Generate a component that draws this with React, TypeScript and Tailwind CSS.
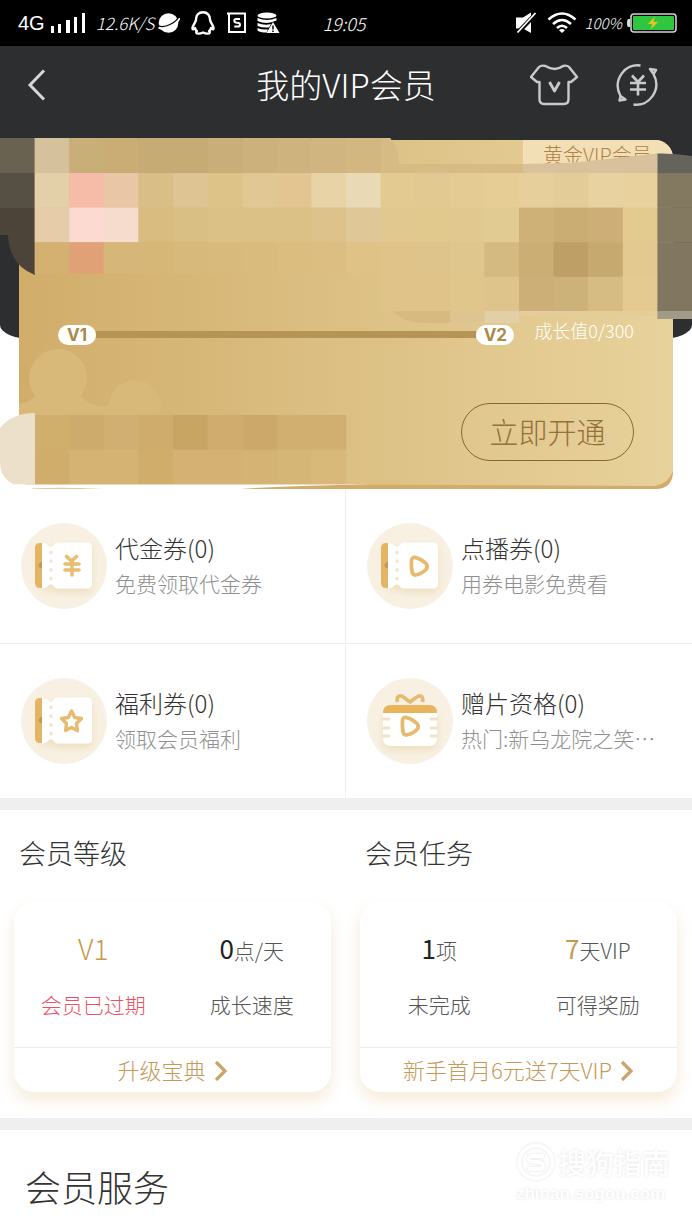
import React from 'react';

const CELL = 34.6;

const mosaicRows: { y: number; h: number; start: number; colors: string[] }[] = [
  { y: 138, h: 35, start: 1, colors: ['#d5c29c', '#c8ae77', '#c9ad75', '#c7ab74', '#c7ab74', '#c9ae7a', '#ccb17c', '#ceb37e', '#d0b580', '#d3b781'] },
  { y: 173, h: 34.6, start: 0, colors: ['#564f43', '#e3d0a8', '#f7bca8', '#e8c6a6', '#d9bf87', '#dec492', '#dec389', '#e1c794', '#e2c591', '#e8d3a6', '#ead9b5', '#e3ca91', '#e2c991', '#e4cb93', '#e6cd95', '#e7cf9c', '#e4cc98', '#e8d2a0', '#e8d19c', '#837860'] },
  { y: 207.6, h: 34.6, start: 1, colors: ['#e6cca9', '#fcdad1', '#f6dccd', '#d8bc80', '#dabf84', '#dcc186', '#dcc186', '#dcc186', '#ddc38b', '#dfc797', '#e0c88e', '#e1c88c', '#e1c88e', '#e2ca93', '#cdb177', '#c9ad73', '#ccae76', '#e3ca8f', '#837860'] },
  { y: 242.2, h: 31, start: 1, colors: ['#d4b170', '#e1a177', '#d7b679', '#d7b778', '#d8b97c', '#d9ba7d', '#d9bb7e', '#dbbd80', '#dcbe82', '#dec286'] },
  { y: 242.2, h: 34.6, start: 11, colors: ['#dfc388', '#dec38a', '#dfc68c', '#d4ba80', '#cbae74', '#be9f66', '#c6a96f', '#e3c98f', '#817760'] },
  { y: 276.8, h: 34.6, start: 11, colors: ['#dfc388', '#dfc389', '#e0c68b', '#dec48b', '#ccaf77', '#ccb179', '#d6bc83', '#e4ca91', '#817760'] },
  { y: 415, h: 34.8, start: 1, colors: ['#d0ae6c', '#cdab6c', '#d1ae72', '#cfac6b', '#c8a563', '#d0ad6f', '#cca96a', '#d1af70', '#d1af70'] },
  { y: 449.8, h: 34.6, start: 1, colors: ['#d0ad6b', '#d4b373', '#d4b373', '#d0ad6b', '#d5b274', '#d5b274', '#d4b375', '#d6b677', '#d8b97a'] },
];

function Mosaic() {
  return (
    <svg className="pointer-events-none absolute inset-0 h-full w-full" viewBox="0 138 692 351" preserveAspectRatio="none" aria-hidden="true">
      <g fill="#d8b97a">
        <circle cx="58" cy="378" r="29" />
        <circle cx="135" cy="406" r="26" />
        <path d="M19 404Q30 402 36 395H80Q90 406 101 406Q108 406 112 402V416H19Z" />
      </g>
      <path d="M340 138H390Q399 148 399 164H523L570 163L657 153.500V173H340Z" fill="#d8c19b" />
      <path d="M340 138H390Q399 148 399 164H523V173H340Z" fill="#d6bb84" />
      <path d="M657.400 153.500Q674 153 692 156V173H657.400Z" fill="#65645c" />
      <path d="M0 138H35V173H0Z" fill="#696250" />
      <path d="M0 207H35V275Q9 265 8 235H0Z" fill="#4c4439" />
      {mosaicRows.map((row) =>
        row.colors.map((color, i) => (
          <rect
            key={`${row.y}-${row.start + i}`}
            x={(row.start + i) * CELL}
            y={row.y}
            width={CELL + 0.4}
            height={row.h + 0.3}
            fill={color}
          />
        )),
      )}
      <path d="M393 311H450V323H425Q405 323 393 311Z" fill="#d6ba80" />
      <path d="M450 311H484.500V322H450Z" fill="#dec491" />
      <path d="M484.500 311H519V323H484.500Z" fill="#e2cfa6" />
      <path d="M519 311H657V316H519Z" fill="#e4cd98" />
      <path d="M657.400 311H692V319H657.400Z" fill="#a19a87" />
      <path d="M35 413V484.400H14Q0 478 0 462V428Q12 413 35 413Z" fill="#ede0ca" />
      <path d="M15 484.400H370L232 489.500H15Z" fill="#fff" />
      <path d="M32 488.500Q60 487 102 489H32Z" fill="#e3c898" />
      <path d="M240 489Q300 485 370 484.500L655 486Q668 484 673 471Q673 489 655 489Z" fill="#d3ac6b" />
    </svg>
  );
}

function StatusBar() {
  return (
    <div className="flex h-[46px] items-center bg-black pr-[15px] pl-[18px] text-white">
      <span className="font-['Liberation_Sans'] text-[20px] leading-6">4G</span>
      <svg className="ml-[5px]" width="36" height="22" viewBox="0 0 36 22" fill="currentColor" aria-hidden="true">
        <path d="M1 14h3v7H1zM8 12h3v9H8zM16 8h4v13h-4zM24 5h3v16h-3zM32 1h3v20h-3z" />
      </svg>
      <span className="ml-[10px] text-[17px] leading-6 font-light italic">12.6K/S</span>
      <svg className="ml-[4px]" width="22" height="22" viewBox="0 0 22 22" aria-hidden="true">
        <circle cx="10.500" cy="11" r="9.800" fill="#fff" />
        <path d="M.5 15.500Q5 18.500 12 15Q20 11 21.500 6" fill="none" stroke="#fff" strokeWidth="2" />
        <path d="M0 13.500Q5 16 12 12.500Q19 9 20.500 5" fill="none" stroke="#000" strokeWidth="1.200" />
      </svg>
      <svg className="ml-[11px]" width="24" height="24" viewBox="0 0 24 24" fill="none" stroke="#fff" strokeWidth="2.400" strokeLinejoin="round" aria-hidden="true">
        <path d="M12 1.300C7.500 1.300 5 4.500 5 8.500C5 11 2 13.500 1.500 17C1.300 19 2.500 18.500 4 17C4.300 18.500 5 19.500 6 20C4.500 21 5 22.600 7.500 22.600C9.500 22.600 11 22 12 21.500C13 22 14.500 22.600 16.500 22.600C19 22.600 19.500 21 18 20C19 19.500 19.700 18.500 20 17C21.500 18.500 22.700 19 22.500 17C22 13.500 19 11 19 8.500C19 4.500 16.500 1.300 12 1.300Z" />
      </svg>
      <svg className="ml-[12px]" width="20" height="22" viewBox="0 0 20 22" fill="none" stroke="#fff" strokeWidth="2" aria-hidden="true">
        <path d="M0 1.500H18V20H2V1" />
        <path d="M13 7H9Q7.300 7 7.300 8.800Q7.300 10.700 10.200 10.700Q13 10.700 13 12.700Q13 14.500 11 14.500H7.300" />
      </svg>
      <svg className="ml-[10px]" width="23" height="22" viewBox="0 0 23 22" aria-hidden="true">
        <g fill="#fff">
          <ellipse cx="10" cy="3.500" rx="9.500" ry="3" />
          <path d="M.5 6Q10 10 19.500 6V8.500Q10 13 .5 9ZM.5 11Q8 14 14 12L12 15.500Q5 16 .5 14ZM.5 16Q5 18 11 17.500L9.500 20.500Q3 20.500 .5 18.500Z" />
          <path d="M16 10L22.500 21H9.500Z" />
        </g>
        <path d="M16 13.500v4M16 18.500v1.500" stroke="#000" strokeWidth="1.500" />
      </svg>
      <time className="ml-[42px] text-[18px] leading-6 font-light italic">19:05</time>
      <div className="ml-auto flex items-center">
        <svg width="22" height="22" viewBox="0 0 22 22" aria-hidden="true">
          <path d="M1 5.500H8L16 .5V21L8 16.500H1Z" fill="#fff" />
          <path d="M2.500 21L21.500 1" stroke="#000" strokeWidth="4.400" />
          <path d="M2.500 20.500L20.500 1" stroke="#fff" strokeWidth="1.800" />
        </svg>
        <svg className="ml-[10px]" width="30" height="22" viewBox="0 0 30 22" fill="none" stroke="#fff" strokeWidth="2.600" aria-hidden="true">
          <path d="M1.500 7.500Q15-4.500 28.500 7.500M6 12Q15 4 24 12M10 16Q15 11.500 20 16" />
          <path d="M12 18.300Q15 15.500 18 18.300L15 21Z" fill="#fff" stroke="none" />
        </svg>
        <span className="ml-[7px] text-[15px] leading-6 font-light italic">100%</span>
        <svg className="ml-[5px]" width="50" height="20" viewBox="0 0 50 20" aria-hidden="true">
          <path d="M3 6H1.500Q0 6 0 10Q0 14 1.500 14H3Z" fill="#ddd" />
          <rect x="4" y="1" width="45" height="18" rx="3" fill="#000" stroke="#d2d2d2" strokeWidth="1.600" />
          <rect x="6" y="3" width="41" height="14" rx="1" fill="#2fc640" />
          <path d="M28 3.500L21 11H25.500L23.500 16.500L31 9H26.500Z" fill="#ecc21c" />
        </svg>
      </div>
    </div>
  );
}

function Header() {
  return (
    <header className="grid h-[92px] grid-cols-[1fr_auto_1fr] items-center bg-[#2d2e30] px-[24px] pb-[14px]">
      <button type="button" aria-label="返回" className="w-fit">
        <svg width="24" height="34" viewBox="0 0 24 34" fill="none" stroke="#d6d6d8" strokeWidth="3" aria-hidden="true">
          <path d="M20 2.500L6 17L20 31.500" />
        </svg>
      </button>
      <h1 className="pb-[2px] text-[33px] leading-10 font-light text-white">我的VIP会员</h1>
      <div className="flex items-center justify-end gap-[36px] pr-[8px]">
        <button type="button" aria-label="装扮">
          <svg width="50" height="42" viewBox="0 0 50 42" fill="none" stroke="#c9cacb" strokeWidth="2.400" strokeLinejoin="round" aria-hidden="true">
            <path d="M15.500 2Q25 8 33 2Q37 1 39 3L47 13L41 18H38.500V35Q38.500 40 34 40H14Q9.500 40 9.500 35V18H7L1 13L9 3Q11 1 15.500 2Z" />
            <path d="M19.500 18L24.500 27L29.500 18" strokeWidth="2.800" />
          </svg>
        </button>
        <button type="button" aria-label="自动续费">
          <svg width="44" height="44" viewBox="0 0 44 44" fill="none" stroke="#c9cacb" strokeWidth="2.400" strokeLinejoin="round" aria-hidden="true">
            <path d="M24.500 2.500C9 0 -4 17 4.500 33L9.500 36.500L3.500 37.500L4.500 33" />
            <path d="M17.500 41.500C33 44 46 27 37.500 11L34 6L40 7L37.500 11" />
            <path d="M16 12.500L22 19L28 12.500M14 20H30M14 26.500H30M22 19V32.500" strokeWidth="2.600" />
          </svg>
        </button>
      </div>
    </header>
  );
}

function LevelTag({ children }: { children: React.ReactNode }) {
  return (
    <span className="flex h-5 w-[38px] shrink-0 items-center justify-center rounded-full bg-white font-['Inter'] text-[17px] leading-5 font-bold text-[#a98a49]">
      {children}
    </span>
  );
}

function MemberCard() {
  return (
    <section className="relative px-[19px] pt-[2px]">
      <div className="absolute inset-x-0 top-0 h-[201px] bg-[#2d2e30] [border-radius:0_0_32px_32px/0_0_14px_14px]" />
      <div className="relative overflow-hidden rounded-[18px] bg-linear-to-r from-[#d1ad6a] via-[#dcc084] to-[#e8d29b] pb-[28px]">
        <div className="ml-auto h-[32px] w-[150px] bg-[#f3dfb6] pl-[20px] text-[20px] leading-[30px] font-light whitespace-nowrap text-[#b0834a]">
          黄金VIP会员
        </div>
        <div className="h-[289px]" />
      </div>
      <Mosaic />
      <div className="absolute inset-x-[58px] bottom-[28px]">
        <div className="flex h-5 items-start" role="progressbar" aria-label="成长值" aria-valuemin={0} aria-valuemax={300} aria-valuenow={0}>
          <LevelTag>V1</LevelTag>
          <div className="mt-[6px] h-[7px] flex-1 bg-[#b59456]" />
          <LevelTag>V2</LevelTag>
          <span className="ml-[20px] text-[18px] leading-[10px] font-light whitespace-nowrap text-white">成长值0/300</span>
        </div>
        <button
          type="button"
          className="mt-[58px] ml-auto block h-[58px] w-[173px] rounded-full border border-[#8a6532] pb-[2px] text-[29px] leading-10 font-light text-[#94703a]"
        >
          立即开通
        </button>
      </div>
    </section>
  );
}

type Glyph = 'yen' | 'play' | 'star' | 'gift';

const playPath = 'M48.500 38Q48.500 34 52.500 34.500Q58.500 36 63 40.500Q65.500 43.500 63 46.500Q58.500 51 52.500 52Q49.500 52 49 48.500Q48 43 48.500 38Z';

function BenefitIcon({ glyph }: { glyph: Glyph }) {
  return (
    <svg className="shrink-0 overflow-visible" width="86" height="86" viewBox="0 0 86 86" aria-hidden="true">
      <defs>
        <filter id={`shade-${glyph}`} x="-30%" y="-30%" width="160%" height="180%">
          <feDropShadow dx="0" dy="4" stdDeviation="4" floodColor="#d9b878" floodOpacity=".35" />
        </filter>
      </defs>
      <circle cx="43" cy="43" r="43" fill="#f8f1e3" />
      {glyph === 'gift' ? (
        <g>
          <path d="M30.500 24C29 17.500 33.500 16.500 37 19.500L43 24L49 19.500C52.500 16.500 57 17.500 55.500 24" fill="none" stroke="#e6bb70" strokeWidth="3.600" />
          <path d="M16 34H70V60Q70 68 62 68H24Q16 68 16 60Z" fill="#fff" filter="url(#shade-gift)" />
          <path d="M16 35Q16 27 24 27H62Q70 27 70 35Z" fill="#e9b45c" />
          <path d="M16 41H22M16 50H22M16 58H22M64 41H70M64 50H70M64 58H70" stroke="#f0e2cc" strokeWidth="2.800" strokeLinecap="round" />
          <path d={playPath} transform="translate(-13 5)" fill="none" stroke="#e6bb70" strokeWidth="3.800" strokeLinejoin="round" />
        </g>
      ) : (
        <g>
          <path d="M22 20V65H19Q14 65 14 60V25Q14 20 19 20Z" fill="#e6b462" />
          <path d="M22 38.500V46Q17.500 45 17.500 42.300Q17.500 39.500 22 38.500Z" fill="#b99455" />
          <path d="M21 20Q26 20.500 28 23.500Q31 25 34 20.500Q35 19.500 37 19.500H66Q71 19.500 71 24.500V60.500Q71 65.500 66 65.500H37Q35 65.500 34 64.500Q31 60 28 62Q26 65 21 65.500Z" fill="#fff" filter={`url(#shade-${glyph})`} />
          <path d="M30 29.500V60" stroke="#f1e4ce" strokeWidth="3.600" strokeDasharray="0 8.700" strokeLinecap="round" />
          {glyph === 'yen' && (
            <path d="M45.500 33.500L50.500 38L55.500 33.500M44 41H58M44 47H58M51 38V52" fill="none" stroke="#e9bd72" strokeWidth="3.600" strokeLinecap="round" />
          )}
          {glyph === 'play' && <path d={playPath} transform="translate(-4 0)" fill="none" stroke="#e6bb70" strokeWidth="3.800" strokeLinejoin="round" />}
          {glyph === 'star' && (
            <path d="M50.500 33L53.700 39.500L60.500 40.500L55.500 45.500L56.500 52.500L50.500 49.500L44.500 52.500L45.500 45.500L40.500 40.500L47.300 39.500Z" fill="none" stroke="#e6bb70" strokeWidth="3.400" strokeLinejoin="round" />
          )}
        </g>
      )}
    </svg>
  );
}

const benefits: { glyph: Glyph; title: string; note: string }[] = [
  { glyph: 'yen', title: '代金券(0)', note: '免费领取代金券' },
  { glyph: 'play', title: '点播券(0)', note: '用券电影免费看' },
  { glyph: 'star', title: '福利券(0)', note: '领取会员福利' },
  { glyph: 'gift', title: '赠片资格(0)', note: '热门:新乌龙院之笑…' },
];

function Benefits() {
  return (
    <section className="grid grid-cols-2">
      {benefits.map((b) => (
        <a key={b.title} href="#" className="flex h-[155px] items-center gap-[8px] border-b border-[#efefef] pl-[21px] odd:border-r nth-3:h-[154px] nth-4:h-[154px] nth-3:border-b-0 nth-4:border-b-0">
          <BenefitIcon glyph={b.glyph} />
          <span className="flex flex-col gap-[3px] pb-[1px] whitespace-nowrap">
            <span className="text-[24px] leading-8 font-light text-[#333]">{b.title}</span>
            <span className="text-[21px] leading-8 font-light text-[#8f8f8f]">{b.note}</span>
          </span>
        </a>
      ))}
    </section>
  );
}

function Panel({ title, stats, action }: { title: string; stats: { value: React.ReactNode; label: React.ReactNode }[]; action: string }) {
  return (
    <div className="pr-[15px] pl-[14px]">
      <h2 className="pl-[5px] text-[27px] leading-9 font-light text-[#333]">{title}</h2>
      <div className="mt-[31px] rounded-[20px] bg-white shadow-[0_8px_16px_rgba(214,170,90,0.24)]">
        <div className="grid h-[145px] grid-cols-2 pt-[28px] text-center text-[21px] font-light text-[#555]">
          {stats.map((s, i) => (
            <div key={i} className="flex flex-col gap-[20px]">
              <div className="h-9 leading-9">{s.value}</div>
              <div className="h-9 leading-9">{s.label}</div>
            </div>
          ))}
        </div>
        <a href="#" className="flex h-[45px] items-center justify-center gap-[8px] border-t border-[#ececec] text-[22px] leading-8 font-light whitespace-nowrap text-[#c59a58]">
          <span className="pb-[2px]">{action}</span>
          <svg width="14" height="22" viewBox="0 0 14 22" fill="none" stroke="#cda468" strokeWidth="3.200" aria-hidden="true">
            <path d="M2 3L11 12L2 21" />
          </svg>
        </a>
      </div>
    </div>
  );
}

function Watermark() {
  return (
    <div className="flex flex-col text-white [text-shadow:0_0_3px_rgba(0,0,0,0.12)]" aria-hidden="true">
      <div className="flex items-center gap-[2px]">
        <svg className="drop-shadow-[0_0_1px_rgba(0,0,0,0.14)]" width="40" height="40" viewBox="0 0 40 40" fill="none" stroke="#fff" strokeWidth="4">
          <circle cx="20" cy="20" r="16.500" />
          <path d="M28 14H17Q13 14 13 17Q13 20 20 20Q27 20 27 23.500Q27 27 23 27H12" />
        </svg>
        <span className="text-[28px] leading-10 font-medium">搜狗指南</span>
      </div>
      <span className="font-['Liberation_Sans'] text-[17px] leading-6 font-bold">zhinan.sogou.com</span>
    </div>
  );
}

export default function App() {
  return (
    <main className="min-h-screen overflow-hidden bg-white font-['Noto_Sans_CJK_SC',sans-serif]">
      <StatusBar />
      <Header />
      <MemberCard />
      <Benefits />
      <div className="h-3 bg-[#efefef]" />
      <section className="grid grid-cols-2 pt-[25px] pb-[26px]">
        <Panel
          title="会员等级"
          action="升级宝典"
          stats={[
            { value: <span className="text-[28px] text-[#c59a4e]">V1</span>, label: <span className="text-[#ee5167]">会员已过期</span> },
            { value: <><span className="text-[26px] font-normal text-[#222]">0</span>点/天</>, label: '成长速度' },
          ]}
        />
        <Panel
          title="会员任务"
          action="新手首月6元送7天VIP"
          stats={[
            { value: <><span className="text-[26px] font-normal text-[#222]">1</span>项</>, label: '未完成' },
            { value: <><span className="text-[26px] font-normal text-[#c59a4e]">7</span>天VIP</>, label: '可得奖励' },
          ]}
        />
      </section>
      <div className="h-3 bg-[#efefef]" />
      <section className="flex items-start justify-between pt-[12px] pr-[22px] pl-[25px]">
        <h2 className="pt-[18px] text-[36px] leading-[52px] font-light text-[#333]">会员服务</h2>
        <Watermark />
      </section>
    </main>
  );
}
